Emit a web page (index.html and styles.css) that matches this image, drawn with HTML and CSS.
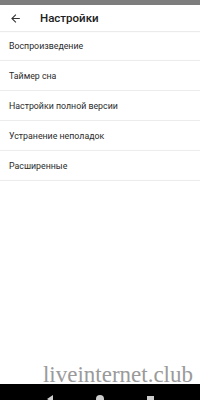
FILE: index.html
```
<!DOCTYPE html>
<html lang="ru">
<head>
<meta charset="utf-8">
<link rel="stylesheet" href="styles.css">
</head>
<body>
<div class="screen">
  <div class="status"></div>
  <header class="appbar">
    <svg class="back" width="13" height="13" viewBox="0 0 24 24"><path d="M20 11H7.83l5.59-5.59L12 4l-8 8 8 8 1.41-1.41L7.83 13H20v-2z" fill="#333"/></svg>
    <span class="title">Настройки</span>
  </header>
  <ul class="list">
    <li class="item">Воспроизведение</li>
    <li class="item">Таймер сна</li>
    <li class="item">Настройки полной версии</li>
    <li class="item">Устранение неполадок</li>
    <li class="item">Расширенные</li>
  </ul>
  <div class="spacer"></div>
  <div class="watermark">liveinternet.club</div>
  <nav class="navbar">
    <span class="nav-back"></span>
    <span class="nav-home"></span>
    <span class="nav-recent"></span>
  </nav>
</div>
</body>
</html>
```
FILE: styles.css
```
html, body {
  margin: 0;
  padding: 0;
  background: #fff;
}
.screen {
  width: 200px;
  height: 400px;
  display: flex;
  flex-direction: column;
  font-family: Roboto, "Noto Sans", sans-serif;
  overflow: hidden;
}
.status {
  height: 5px;
  background: #7d7d7d;
  flex: none;
}
.appbar {
  height: 26px;
  flex: none;
  display: flex;
  align-items: center;
  padding-left: 9px;
  background: #fff;
  box-shadow: 0 1px 1px rgba(0,0,0,0.08);
  position: relative;
  z-index: 1;
}
.back {
  display: block;
}
.title {
  margin-left: 18px;
  font-size: 11.5px;
  font-weight: 500;
  color: #202020;
}
.list {
  list-style: none;
  margin: 0;
  padding: 0;
  flex: none;
}
.item {
  height: 29px;
  display: flex;
  align-items: center;
  padding-left: 9px;
  font-size: 8.8px;
  color: #2a2a2a;
  border-bottom: 1px solid #ececec;
}
.spacer {
  flex: 1;
}
.watermark {
  flex: none;
  text-align: right;
  padding-right: 7px;
  font-family: "Liberation Serif", serif;
  font-size: 23px;
  line-height: 20px;
  color: #9a9a9a;
  height: 19px;
}
.navbar {
  flex: none;
  height: 16px;
  background: #000;
  display: flex;
  justify-content: center;
  gap: 43px;
  align-items: flex-end;
  overflow: hidden;
}
.nav-back {
  width: 0;
  height: 0;
  border-top: 4px solid transparent;
  border-bottom: 4px solid transparent;
  border-right: 6px solid #ccc;
  margin-bottom: -3px;
}
.nav-home {
  width: 8px;
  height: 8px;
  border-radius: 50%;
  background: #ccc;
  margin-bottom: -3px;
}
.nav-recent {
  width: 7px;
  height: 7px;
  background: #ccc;
  margin-bottom: -3px;
}
```
